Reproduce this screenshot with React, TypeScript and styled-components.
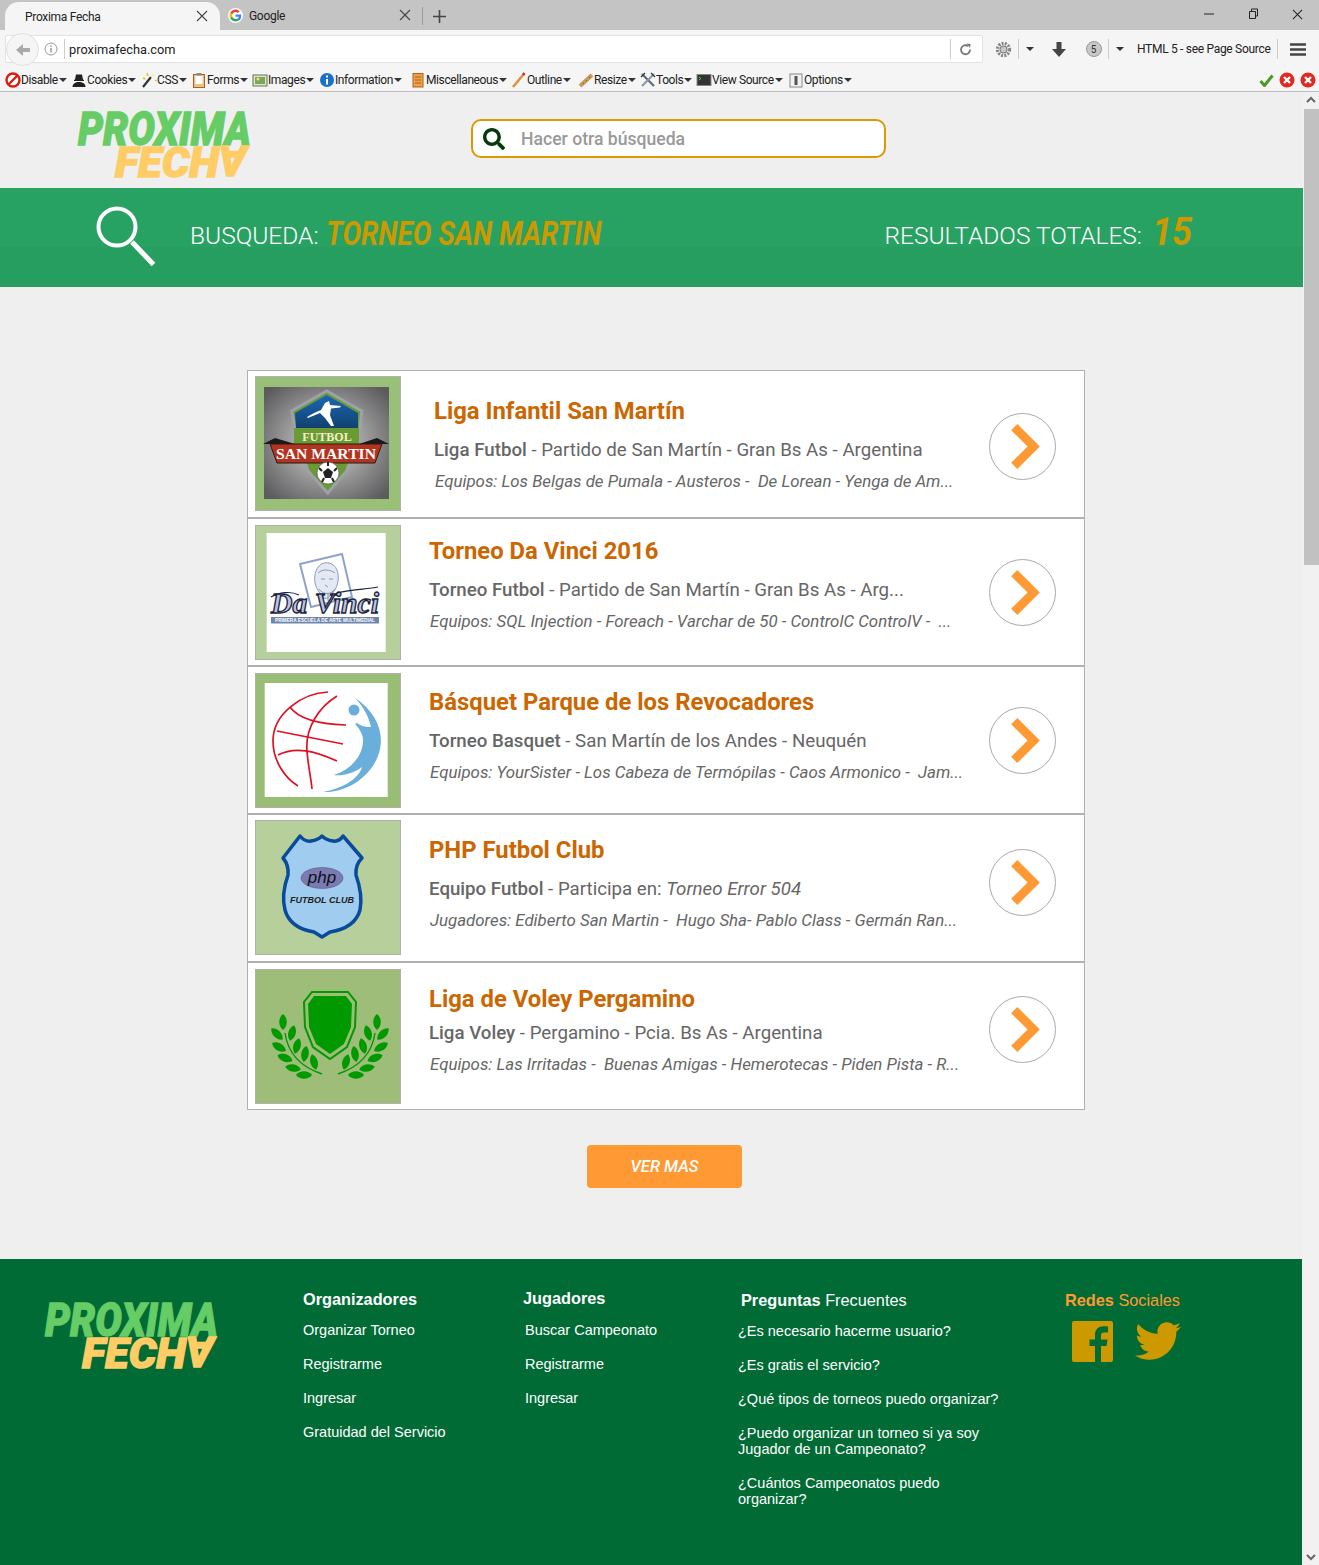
import React from 'react';
import styled, { createGlobalStyle } from 'styled-components';
import { FaTwitter, FaSearch } from 'react-icons/fa';

const Global = createGlobalStyle`
  html, body { margin: 0; padding: 0; background: #efefef; }
  * { box-sizing: border-box; }
  a { color: inherit; text-decoration: none; }
`;

const Window = styled.div`
  width: 1319px; height: 1565px; overflow: hidden; display: flex; flex-direction: column;
  background: #efefef; font-family: Roboto, sans-serif;
`;

/* ---------- browser chrome ---------- */
const TabBar = styled.div`
  height: 30px; flex: none; background: #c4c4c4; display: flex; align-items: flex-end; padding-left: 5px;
  font: 12px Roboto, sans-serif; letter-spacing: -0.3px; color: #222;
`;
const Tab = styled.div<{ $active?: boolean }>`
  height: ${p => (p.$active ? 28 : 30)}px; width: ${p => (p.$active ? 215 : 201)}px; flex: none;
  display: flex; align-items: center; gap: 6px;
  padding-left: ${p => (p.$active ? 20 : 8)}px; padding-right: ${p => (p.$active ? 12 : 10)}px;
  background: ${p => (p.$active ? '#f5f5f5' : 'transparent')};
  border-radius: ${p => (p.$active ? '14px 14px 0 0' : '0')};
`;
const TabTitle = styled.span`flex: 1; white-space: nowrap; padding-top: 1px;`;
const TabSep = styled.div`width: 1px; height: 18px; background: #999; margin: 0 0 5px 1px; flex: none;`;
const NewTab = styled.div`margin: 0 0 7px 10px; flex: none; display: flex;`;
const WinControls = styled.div`margin-left: auto; display: flex; align-items: center; gap: 31px; padding: 0 16px 10px 0;`;

const NavBar = styled.div`
  height: 37px; flex: none; background: #f5f5f5; display: flex; align-items: center; padding: 1px 0 0 5px;
  font: 12px Roboto, sans-serif; letter-spacing: -0.3px; color: #222;
`;
const UrlBox = styled.div`
  width: 978px; height: 28px; background: #fff; border: 1px solid #e2e2e2; border-radius: 2px;
  display: flex; align-items: center; position: relative; padding: 0 6px 0 38px; flex: none;
`;
const BackCircle = styled.div`
  position: absolute; left: 0; top: -3px; width: 33px; height: 33px; border-radius: 50%;
  background: #f5f5f5; border: 1px solid #e0e0e0; display: flex; align-items: center; justify-content: center;
`;
const UrlSep = styled.div`width: 1px; height: 20px; background: #ccc; margin: 0 4px 0 6px; flex: none;`;
const NavSep = styled.div`width: 1px; height: 20px; background: #ccc; flex: none;`;
const UrlText = styled.span`flex: 1; font-size: 12.8px; letter-spacing: 0; color: #222; padding-top: 1px;`;
const NavSpacer = styled.div<{ $w: number; $ml?: number }>`
  width: ${p => p.$w}px; margin-left: ${p => p.$ml ?? 0}px; flex: none; display: flex; align-items: center; justify-content: center;
`;
const Badge = styled.div`
  width: 16px; height: 16px; border-radius: 50%; background: #c8c8c8; border: 1px solid #999;
  font-size: 10px; display: flex; align-items: center; justify-content: center; color: #333;
`;
const HtmlLabel = styled.span`white-space: nowrap; margin-left: 8px; width: 140px; flex: none;`;

const ToolBar = styled.div`
  height: 25px; flex: none; background: #f5f5f5; border-bottom: 1px solid #bdbdbd;
  display: flex; align-items: center; padding: 2px 3px 0 5px; font: 12px Roboto, sans-serif; color: #222;
`;
const ToolItem = styled.div<{ $w: number }>`
  width: ${p => p.$w}px; flex: none; display: flex; align-items: center; white-space: nowrap;
  letter-spacing: -0.4px;
`;
const Caret = styled.span`
  width: 0; height: 0; border-left: 4px solid transparent; border-right: 4px solid transparent;
  border-top: 4px solid #333; margin-left: 1px; flex: none;
`;
const ToolEnd = styled.div`margin-left: auto; display: flex; align-items: center; gap: 5px;`;

/* ---------- page ---------- */
const Viewport = styled.div`flex: 1; display: flex; min-height: 0;`;
const Content = styled.div`width: 1303px; flex: none; display: flex; flex-direction: column;`;
const ScrollBar = styled.div`
  width: 16px; flex: none; background: #f1f1f1; display: flex; flex-direction: column; align-items: center;
  justify-content: space-between; position: relative; padding: 4px 0;
`;
const ScrollThumb = styled.div`position: absolute; left: 1px; top: 17px; width: 15px; height: 456px; background: #c1c1c1;`;

const Header = styled.header`height: 96px; flex: none; display: flex; align-items: flex-start; padding: 18px 0 0 77px;`;
const SearchBox = styled.div`
  width: 415px; height: 39px; margin: 9px 0 0 218px; background: #fff; border: 2px solid #dd9900; border-radius: 10px;
  display: flex; align-items: center; padding-left: 10px; color: #063a0c; flex: none;
`;
const SearchHint = styled.span`margin-left: 16px; font: 500 17.6px Roboto, sans-serif; color: #999;`;

const Banner = styled.section`
  height: 99px; flex: none; display: flex; align-items: flex-start; padding: 18px 114px 0 96px;
  background: linear-gradient(#27a263 0 60%, #259e60 60%); color: #fff;
`;
const BigLens = styled.svg`width: 60px; height: 60px; flex: none;`;
const BannerLabel = styled.span`font: 300 24.5px/32px Roboto, sans-serif; white-space: nowrap; margin-top: 14px;`;
const BannerLabelFirst = styled(BannerLabel)`margin-left: 34px;`;
const BannerLabelRight = styled(BannerLabel)`margin-left: auto;`;
const Condensed = styled.span<{ $w: number; $size: number; $scale: number; $top: number; $gap: number }>`
  display: block; flex: none; width: ${p => p.$w}px; margin: ${p => p.$top}px 0 0 ${p => p.$gap}px; white-space: nowrap;
  font: italic 700 ${p => p.$size}px/40px Roboto, sans-serif; color: #cc9900;
  transform: scaleX(${p => p.$scale}); transform-origin: left center;
`;

const Main = styled.main`width: 838px; margin: 83px 0 0 247px; flex: none; display: flex; flex-direction: column;`;
const List = styled.div`height: 740px; background: #fff; border: 1px solid #b0b0b0; display: flex; flex-direction: column;`;
const Row = styled.article<{ $last?: boolean }>`
  height: ${p => (p.$last ? 146 : 148)}px; flex: none; display: flex; padding-left: 7px;
  border-bottom: ${p => (p.$last ? '0' : '2px solid #b0b0b0')};
`;
const Thumb = styled.div<{ $bg: string; $top: number }>`
  width: 146px; height: 135px; flex: none; margin-top: ${p => p.$top}px; background: ${p => p.$bg}; border: 1px solid #b0b0b0;
  svg { display: block; width: 144px; height: 133px; }
`;
const RowText = styled.div<{ $left: number; $top: number }>`
  margin: ${p => p.$top}px 0 0 ${p => p.$left}px; width: 540px; flex: none; white-space: nowrap;
`;
const Title = styled.h2`margin: 0; font: 700 23.85px/30px Roboto, sans-serif; color: #cc6600;`;
const Sub = styled.p<{ $gap: number }>`margin: ${p => p.$gap}px 0 0; font: 400 18.7px/24px Roboto, sans-serif; color: #666;`;
const SubStrong = styled.span`font-weight: 500;`;
const Teams = styled.p`margin: 8px 0 0 1px; font: italic 400 16.85px/22px Roboto, sans-serif; color: #666;`;
const Arrow = styled.a<{ $top: number }>`
  width: 67px; height: 67px; flex: none; margin: ${p => p.$top}px 28px 0 auto; border-radius: 50%; border: 1px solid #aaa;
  display: flex; align-items: center; justify-content: center; background: #fff;
`;
const More = styled.button`
  width: 155px; height: 43px; margin: 35px 0 0 340px; background: #ff9933; border: 0; border-radius: 4px; color: #fff;
  font: italic 500 16.5px Roboto, sans-serif; flex: none;
`;

/* ---------- footer ---------- */
const Footer = styled.footer`
  margin-top: 71px; width: 1302px; flex: 1; background: #006b35; color: #fff; padding: 30px 0 0 44px;
  display: grid; grid-template-columns: 259px 220px 215px 327px 1fr; font: 14.5px/16px "Liberation Sans", Arial, sans-serif;
`;
const FooterLogo = styled.div`padding-top: 12px;`;
const Column = styled.div`display: flex; flex-direction: column; align-items: flex-start;`;
const ColHead = styled.h3<{ $left?: number; $top?: number; $color?: string }>`
  margin: ${p => p.$top ?? 0}px 0 0 ${p => p.$left ?? 0}px; font: 700 16.3px/20px "Liberation Sans", Arial, sans-serif;
  color: ${p => p.$color ?? '#fff'}; white-space: nowrap;
`;
const HeadLight = styled.span`font-weight: 400;`;
const Links = styled.div<{ $left?: number; $top: number }>`
  margin: ${p => p.$top}px 0 0 ${p => p.$left ?? 0}px; display: flex; flex-direction: column; gap: 18px; width: 265px;
`;
const Social = styled.div`display: flex; align-items: center; gap: 22px; margin: 8px 0 0 7px; color: #cc9900;`;

/* ---------- drawings ---------- */
const LogoSvg = styled.svg`width: 176px; height: 70px; display: block; overflow: visible; flex: none;`;
const LogoWord = styled.text<{ $fill: string; $size: number }>`
  font: italic 900 ${p => p.$size}px Roboto, sans-serif; fill: ${p => p.$fill}; stroke: ${p => p.$fill}; stroke-width: 1.3px;
`;
const Logo = () => (
  <LogoSvg viewBox="0 0 176 70">
    <LogoWord $fill="#66cc66" $size={47} x="1" y="34.500" textLength="173" lengthAdjust="spacingAndGlyphs">PROXIMA</LogoWord>
    <LogoWord $fill="#ffcc66" $size={43} x="38" y="66.500" textLength="104" lengthAdjust="spacingAndGlyphs">FECH</LogoWord>
    <LogoWord $fill="#ffcc66" $size={43} transform="translate(170 36) rotate(180)" x="0" y="0" textLength="28" lengthAdjust="spacingAndGlyphs">A</LogoWord>
  </LogoSvg>
);

const ThumbLabel = styled.text<{ $size: number; $fill: string; $family?: string; $style?: string }>`
  font: ${p => p.$style ?? '700'} ${p => p.$size}px ${p => p.$family ?? '"Liberation Serif", serif'};
  fill: ${p => p.$fill}; text-anchor: middle;
`;

const SanMartinArt = () => (
  <svg viewBox="1 1 144 133">
    <defs>
      <radialGradient id="sm" cx="50%" cy="50%" r="65%"><stop offset="0" stopColor="#d8d8d8" /><stop offset="1" stopColor="#5c5c5e" /></radialGradient>
      <linearGradient id="smb" x1="0" y1="0" x2="0" y2="1"><stop offset="0" stopColor="#1a66b8" /><stop offset="1" stopColor="#12426e" /></linearGradient>
    </defs>
    <rect x="9" y="11" width="125" height="112" fill="url(#sm)" />
    <polygon points="71.7,15 106.7,35 105,52 91.700,95 72.700,117 53,95 40,52 36.700,35" fill="#6a9a34" stroke="#9ea2a8" strokeWidth="3" />
    <polygon points="71.7,19 103,37 103,52 41,52 40,37" fill="url(#smb)" />
    <path d="M52 41 Q60 36 66 34 L70 27 L74 25 L75 29 L86 30 L85 31.500 L76 32.500 L75 39 L79 50 L76 50 L70 42 L65 37 L53 42Z" fill="#fff" />
    <rect x="39" y="52" width="65" height="17" fill="#6a9a34" />
    <ThumbLabel $size={12} $fill="#f4efc8" x="72" y="65">FUTBOL</ThumbLabel>
    <polygon points="8,68 20,62 40,68" fill="#1a1a1a" />
    <polygon points="134,68 122,62 104,68" fill="#1a1a1a" />
    <polygon points="15,68 127,68 120,87 22,87" fill="#b03420" stroke="#2a1a16" strokeWidth="1" />
    <ThumbLabel $size={15.500} $fill="#fff" x="71" y="83" textLength="100" lengthAdjust="spacingAndGlyphs">SAN MARTIN</ThumbLabel>
    <circle cx="73" cy="97" r="11" fill="#fff" stroke="#444" strokeWidth=".6" />
    <polygon points="73,92 78,96 76,102 70,102 68,96" fill="#222" />
    <path d="M73 86v4M64 92l3 3M82 92l-3 3M67 106l2-4M79 106l-2-4" stroke="#222" strokeWidth="2" />
  </svg>
);

const DaVinciArt = () => (
  <svg viewBox="1 1 144 133">
    <rect x="11.7" y="8" width="119" height="119" fill="#fff" />
    <polygon points="45,39 87,29 97,72 56,82" fill="#fff" stroke="#8ea3cc" strokeWidth="2" />
    <path d="M60 58c-2-14 6-22 14-20 8 2 10 10 9 18-1 8-6 14-12 18-4-3-9-8-11-16z" fill="#e4e9f3" stroke="#8b9cbc" strokeWidth="1" />
    <path d="M63 48c4-4 12-4 17 0M66 54h4M74 54h4M70 60l3 2M64 64c4 6 12 6 16 0M67 68l2 6M73 68l0 8M78 66l-1 6" stroke="#7d8eb0" strokeWidth=".9" fill="none" />
    <ThumbLabel $size={29} $fill="#b9c6e2" $style="italic 700" x="70" y="88" stroke="#1d2340" strokeWidth="1.300" textLength="108" lengthAdjust="spacingAndGlyphs">Da Vinci</ThumbLabel>
    <path d="M16 72c8-5 20-6 28-2M82 68c10-3 30-4 41-6" fill="none" stroke="#1d2340" strokeWidth="1.200" />
    <rect x="16" y="92" width="108" height="6.500" fill="#6f86ad" />
    <ThumbLabel $size={4.600} $fill="#fff" $family='"Liberation Sans", sans-serif' x="70" y="97" textLength="100" lengthAdjust="spacingAndGlyphs">PRIMERA ESCUELA DE ARTE MULTIMEDIAL</ThumbLabel>
  </svg>
);

const BasketArt = () => (
  <svg viewBox="1 1 144 133">
    <rect x="9.7" y="10" width="123" height="114" fill="#fff" />
    <g fill="none" stroke="#dd1122" strokeWidth="1.700">
      <path d="M73 19 C48 20 18 40 18 68 C18 88 30 105 43 113" />
      <path d="M82 23 C64 34 50 55 52 78 C53 92 56 105 57 116" />
      <path d="M35 34 C42 44 60 51 91 52" />
      <path d="M22 58 L88 71" />
      <path d="M23 82 C40 73 60 78 82 88" />
    </g>
    <circle cx="99" cy="37" r="5.500" fill="#6aaedc" />
    <path d="M100 25 C120 38 129 58 125 76 C120 100 95 120 68 119 C86 116 104 106 107 94 C98 101 86 103 79 102 C94 97 106 86 108 70 C109 62 104 55 100 51 L102 50 C107 54 112 54 116 54 C114 44 108 33 100 25Z" fill="#6aaedc" />
  </svg>
);

const PhpArt = () => (
  <svg viewBox="1 1 144 133">
    <path d="M45 16 Q50 22 56 21 Q63 20 67 16 Q71 20 78 21 Q84 22 88 16 L107 38 Q100 45 101 55 Q108 75 105 90 Q100 108 75 112 L67 117 L59 112 Q35 108 30 90 Q26 75 33 55 Q34 45 28 38 Z" fill="#a0ccf0" stroke="#0a4a9a" strokeWidth="3.500" strokeLinejoin="round" />
    <ellipse cx="67" cy="58" rx="21" ry="10.500" fill="#7a7ab5" stroke="#555" strokeWidth=".5" />
    <ThumbLabel $size={17} $fill="#111" $family='"Liberation Sans", sans-serif' $style="italic 400" x="67" y="63">php</ThumbLabel>
    <ThumbLabel $size={9} $fill="#222" $family='"Liberation Sans", sans-serif' $style="italic 700" x="67" y="83">FUTBOL CLUB</ThumbLabel>
  </svg>
);

const LEAVES: [number, number, number][] = [
  [28, 53, 0], [22, 65, -45], [37, 64, 15], [24, 78, -60], [42, 77, 15],
  [30, 89, -70], [50, 85, 10], [38, 99, -80], [59, 93, -15], [49, 106, -90],
];
const Branch = () => (
  <g fill="#009900">
    {LEAVES.map(([x, y, r]) => (
      <path key={`${x}-${y}`} d="M0 -8 C5 -4 5 4 0 8 C-5 4 -5 -4 0 -8z" transform={`translate(${x} ${y}) rotate(${r})`} />
    ))}
    <path d="M30 64 C33 85 46 98 67 105" fill="none" stroke="#009900" strokeWidth="1.400" />
  </g>
);
const LaurelArt = () => (
  <svg viewBox="1 1 144 133">
    <polygon points="57,23 93,23 101,33 100,58 92,78 75,90 58,78 50,58 49,33" fill="none" stroke="#009900" strokeWidth="2" />
    <polygon points="59,27 91,27 97,35 96,58 89,75 75,85 61,75 54,58 53,35" fill="#009900" />
    <Branch />
    <g transform="translate(150 0) scale(-1 1)"><Branch /></g>
  </svg>
);

const Chevron = () => (
  <svg width="67" height="67" viewBox="0 0 67 67"><polyline points="25,13.500 45,33.500 25,53.500" fill="none" stroke="#ff9933" strokeWidth="9" /></svg>
);

const FacebookMark = () => (
  <svg width="41" height="41" viewBox="0 0 41 41">
    <path fill="currentColor" d="M2 0h37a2 2 0 0 1 2 2v37a2 2 0 0 1-2 2H29V25h5.500l1-6.500H29v-4c0-2 .8-3 3-3h4V5.500c-1-.1-2.500-.3-4.500-.3-5 0-8.500 3-8.500 8.500v4.800h-5.500V25H23v16H2a2 2 0 0 1-2-2V2a2 2 0 0 1 2-2z" />
  </svg>
);

const X = ({ size = 12, color = '#444' }: { size?: number; color?: string }) => (
  <svg width={size} height={size} viewBox="0 0 12 12" style={{ flex: 'none' }}><path d="M1 1l10 10M11 1L1 11" stroke={color} strokeWidth="1.100" /></svg>
);

const GoogleG = () => (
  <svg width="15" height="15" viewBox="0 0 48 48" style={{ flex: 'none' }}>
    <circle cx="24" cy="24" r="24" fill="#fff" />
    <path fill="#EA4335" d="M24 13c3 0 5.500 1 7.500 3l5.500-5.500C33.500 7 29 5 24 5 16.500 5 10 9.300 7 15.600l6.500 5C15 16.400 19 13 24 13z" />
    <path fill="#4285F4" d="M42.500 24.500c0-1.400-.1-2.700-.4-4H24v7.600h10.500c-.5 2.500-1.900 4.600-4 6l6.300 4.900c3.700-3.400 5.700-8.400 5.700-14.500z" />
    <path fill="#FBBC05" d="M13.500 28.400c-.9-2.700-.9-6 0-8.800l-6.500-5c-2.700 5.500-2.700 13.300 0 18.800z" />
    <path fill="#34A853" d="M24 43c5 0 9.400-1.700 12.800-4.500l-6.300-4.900c-1.700 1.200-4 1.900-6.500 1.900-5 0-9-3.400-10.500-8l-6.500 5C10 38.700 16.500 43 24 43z" />
  </svg>
);

type IconKey = 'disable' | 'cookies' | 'css' | 'forms' | 'images' | 'info' | 'misc' | 'outline' | 'resize' | 'tools' | 'source' | 'options';
const ToolIcon = ({ kind }: { kind: IconKey }) => {
  const art: Record<IconKey, React.ReactNode> = {
    disable: <><circle cx="8" cy="8" r="6.500" fill="#fff" stroke="#d81f14" strokeWidth="2.400" /><path d="M3.500 12.500l9-9" stroke="#d81f14" strokeWidth="2.400" /></>,
    cookies: <><path d="M5 2.500h6l1 5 1 .5v1H3V8l1-.5z" fill="#222" /><path d="M1.500 15c0-3.500 3-5 6.500-5s6.500 1.500 6.500 5z" fill="#222" /></>,
    css: <><path d="M2 15L10 5" stroke="#333" strokeWidth="2.200" /><path d="M10 5l3-3.500" stroke="#f2f2c0" strokeWidth="2.200" /><path d="M6 1l1 3M14 8l1.500 1M2 6l2.500 1" stroke="#e6c020" strokeWidth="1.500" /></>,
    forms: <><rect x="2.500" y="2.500" width="11" height="13" fill="#f0c080" stroke="#a8622a" /><rect x="4.500" y="4" width="7" height="8" fill="#fff" /><rect x="5.500" y="1" width="5" height="2.500" fill="#888" /></>,
    images: <><rect x="1" y="3" width="14" height="11" fill="#dfe6d4" stroke="#66704f" /><rect x="3" y="5" width="10" height="7" fill="#78a858" /><circle cx="6" cy="7" r="1.500" fill="#f4e27a" /></>,
    info: <><circle cx="8" cy="8" r="7" fill="#1a6fc8" /><rect x="7" y="7" width="2" height="5.500" fill="#fff" /><rect x="7" y="3.500" width="2" height="2" fill="#fff" /></>,
    misc: <><rect x="3" y="1.500" width="10" height="13.500" fill="#f0a040" stroke="#a8622a" /><path d="M5 5h6M5 8h6M5 11h6" stroke="#a8622a" /></>,
    outline: <><path d="M2 15L12 3" stroke="#e09040" strokeWidth="2.600" /><path d="M12 3l1.500-1.800" stroke="#c02020" strokeWidth="2.600" /></>,
    resize: <><path d="M2 14L14 3" stroke="#c89858" strokeWidth="4" /><path d="M5 11l1 1M8 8l1 1M11 5l1 1" stroke="#7a5a2a" /></>,
    tools: <><path d="M2 2l12 12" stroke="#667" strokeWidth="2.200" /><path d="M14 2L2 14" stroke="#8899aa" strokeWidth="2.200" /><path d="M1 5l4-4M11 1l4 4" stroke="#333" strokeWidth="1.200" /></>,
    source: <><rect x="1" y="2.500" width="14" height="11" fill="#333" stroke="#888" /><path d="M3 5l2 1.500L3 8" stroke="#5c5" fill="none" /></>,
    options: <><rect x="2" y="2" width="12" height="13" fill="#f2f2f2" stroke="#888" /><rect x="6.500" y="4" width="3" height="9" fill="#555" /></>,
  };
  return <svg width="16" height="16" viewBox="0 0 16 16" style={{ flex: 'none' }}>{art[kind]}</svg>;
};

const TOOLS: { k: IconKey; t: string; w: number }[] = [
  { k: 'disable', t: 'Disable', w: 66 }, { k: 'cookies', t: 'Cookies', w: 70 }, { k: 'css', t: 'CSS', w: 50 },
  { k: 'forms', t: 'Forms', w: 61 }, { k: 'images', t: 'Images', w: 67 }, { k: 'info', t: 'Information', w: 91 },
  { k: 'misc', t: 'Miscellaneous', w: 101 }, { k: 'outline', t: 'Outline', w: 67 }, { k: 'resize', t: 'Resize', w: 62 },
  { k: 'tools', t: 'Tools', w: 56 }, { k: 'source', t: 'View Source', w: 92 }, { k: 'options', t: 'Options', w: 70 },
];

const Strong = SubStrong;
const ROWS = [
  { art: <SanMartinArt />, bg: '#9abf78', thumbTop: 5, left: 33, top: 25, title: 'Liga Infantil San Martín', gap: 12, arrow: 42,
    sub: <><Strong>Liga Futbol</Strong> - Partido de San Martín - Gran Bs As - Argentina</>,
    teams: 'Equipos: Los Belgas de Pumala - Austeros -\u00A0 De Lorean - Yenga de Am...' },
  { art: <DaVinciArt />, bg: '#b6d09c', thumbTop: 6, left: 28, top: 17, title: 'Torneo Da Vinci 2016', gap: 12, arrow: 40,
    sub: <><Strong>Torneo Futbol</Strong> - Partido de San Martín - Gran Bs As - Arg...</>,
    teams: 'Equipos: SQL Injection - Foreach - Varchar de 50 - ControlC ControlV -\u00A0 ...' },
  { art: <BasketArt />, bg: '#9abd75', thumbTop: 6, left: 28, top: 20, title: 'Básquet Parque de los Revocadores', gap: 12, arrow: 40,
    sub: <><Strong>Torneo Basquet</Strong> - San Martín de los Andes - Neuquén</>,
    teams: 'Equipos: YourSister - Los Cabeza de Termópilas - Caos Armonico -\u00A0 Jam...' },
  { art: <PhpArt />, bg: '#b7d09b', thumbTop: 5, left: 28, top: 20, title: 'PHP Futbol Club', gap: 12, arrow: 34,
    sub: <><Strong>Equipo Futbol</Strong> - Participa en: <em>Torneo Error 504</em></>,
    teams: 'Jugadores: Ediberto San Martin -\u00A0 Hugo Sha- Pablo Class - Germán Ran...' },
  { art: <LaurelArt />, bg: '#9dbd78', thumbTop: 6, left: 28, top: 21, title: 'Liga de Voley Pergamino', gap: 7, arrow: 33,
    sub: <><Strong>Liga Voley</Strong> - Pergamino - Pcia. Bs As - Argentina</>,
    teams: 'Equipos: Las Irritadas -\u00A0 Buenas Amigas - Hemerotecas - Piden Pista - R...' },
];

export default function App() {
  return (
    <Window>
      <Global />
      <TabBar>
        <Tab $active><TabTitle>Proxima Fecha</TabTitle><X /></Tab>
        <Tab><GoogleG /><TabTitle>Google</TabTitle><X /></Tab>
        <TabSep />
        <NewTab><svg width="13" height="13" viewBox="0 0 13 13"><path d="M6.500 0v13M0 6.500h13" stroke="#444" strokeWidth="1.600" /></svg></NewTab>
        <WinControls>
          <svg width="14" height="12" viewBox="0 0 14 12"><path d="M2 6h10" stroke="#222" /></svg>
          <svg width="14" height="12" viewBox="0 0 14 12"><path d="M4.500 3V1h6v7h-2M2.500 3.500h6v7h-6z" fill="none" stroke="#222" /></svg>
          <X size={11} color="#222" />
        </WinControls>
      </TabBar>
      <NavBar>
        <UrlBox>
          <BackCircle>
            <svg width="16" height="16" viewBox="0 0 16 16"><path d="M15 6H8V2L1 8l7 6v-4h7z" fill="#aaa" /></svg>
          </BackCircle>
          <svg width="14" height="14" viewBox="0 0 14 14"><circle cx="7" cy="7" r="6" fill="none" stroke="#999" /><path d="M7 6v4.500M7 3.500v1.500" stroke="#888" strokeWidth="1.300" /></svg>
          <UrlSep />
          <UrlText>proximafecha.com</UrlText>
          <UrlSep />
          <NavSpacer $w={21}>
            <svg width="13" height="13" viewBox="0 0 13 13"><path d="M11 6.500A4.500 4.500 0 1 1 9 3" fill="none" stroke="#777" strokeWidth="1.800" /><path d="M7.500 0.500l4 .5-.5 4z" fill="#777" /></svg>
          </NavSpacer>
        </UrlBox>
        <NavSpacer $w={30} $ml={5}>
          <svg width="17" height="17" viewBox="0 0 17 17"><circle cx="8.500" cy="8.500" r="6" fill="none" stroke="#888" strokeWidth="3.400" strokeDasharray="2 1.200" /><circle cx="8.500" cy="8.500" r="3.500" fill="#c8c8c8" stroke="#777" /></svg>
        </NavSpacer>
        <NavSep />
        <NavSpacer $w={20}><Caret /></NavSpacer>
        <NavSpacer $w={40}>
          <svg width="14" height="15" viewBox="0 0 14 15"><path d="M4.500 0h5v7H14L7 15 0 7h4.500z" fill="#444" /></svg>
        </NavSpacer>
        <NavSpacer $w={29}><Badge>5</Badge></NavSpacer>
        <NavSep />
        <NavSpacer $w={20}><Caret /></NavSpacer>
        <HtmlLabel>HTML 5 - see Page Source</HtmlLabel>
        <NavSep />
        <NavSpacer $w={40}>
          <svg width="16" height="13" viewBox="0 0 16 13"><path d="M0 1.500h16M0 6.500h16M0 11.500h16" stroke="#444" strokeWidth="2.400" /></svg>
        </NavSpacer>
      </NavBar>
      <ToolBar>
        {TOOLS.map(i => (
          <ToolItem key={i.k} $w={i.w}><ToolIcon kind={i.k} />{i.t}<Caret /></ToolItem>
        ))}
        <ToolEnd>
          <svg width="15" height="13" viewBox="0 0 15 13"><path d="M1.500 7l4 4.500L13.500 1.500" fill="none" stroke="#4a9a20" strokeWidth="3" /></svg>
          {[0, 1].map(n => (
            <svg key={n} width="16" height="16" viewBox="0 0 16 16"><circle cx="8" cy="8" r="7.500" fill="#e02a20" /><path d="M5 5l6 6M11 5l-6 6" stroke="#fff" strokeWidth="2.400" /></svg>
          ))}
        </ToolEnd>
      </ToolBar>
      <Viewport>
        <Content>
          <Header>
            <Logo />
            <SearchBox><FaSearch size={22} /><SearchHint>Hacer otra búsqueda</SearchHint></SearchBox>
          </Header>
          <Banner>
            <BigLens viewBox="0 0 60 60">
              <circle cx="21" cy="21" r="18.500" fill="none" stroke="#fff" strokeWidth="4" />
              <path d="M36 36l21.500 22.500" stroke="#fff" strokeWidth="5" />
            </BigLens>
            <BannerLabelFirst>BUSQUEDA:</BannerLabelFirst>
            <Condensed $w={274} $size={34} $scale={0.82} $top={7} $gap={7}>TORNEO SAN MARTIN</Condensed>
            <BannerLabelRight>RESULTADOS TOTALES:</BannerLabelRight>
            <Condensed $w={37} $size={38} $scale={0.95} $top={6} $gap={10}>15</Condensed>
          </Banner>
          <Main>
            <List>
              {ROWS.map((r, idx) => (
                <Row key={r.title} $last={idx === ROWS.length - 1}>
                  <Thumb $bg={r.bg} $top={r.thumbTop}>{r.art}</Thumb>
                  <RowText $left={r.left} $top={r.top}>
                    <Title>{r.title}</Title>
                    <Sub $gap={r.gap}>{r.sub}</Sub>
                    <Teams>{r.teams}</Teams>
                  </RowText>
                  <Arrow $top={r.arrow}><Chevron /></Arrow>
                </Row>
              ))}
            </List>
            <More>VER MAS</More>
          </Main>
          <Footer>
            <FooterLogo><Logo /></FooterLogo>
            <Column>
              <ColHead>Organizadores</ColHead>
              <Links $top={13}>
                <a>Organizar Torneo</a><a>Registrarme</a><a>Ingresar</a><a>Gratuidad del Servicio</a>
              </Links>
            </Column>
            <Column>
              <ColHead $top={-1}>Jugadores</ColHead>
              <Links $left={2} $top={14}>
                <a>Buscar Campeonato</a><a>Registrarme</a><a>Ingresar</a>
              </Links>
            </Column>
            <Column>
              <ColHead $left={3} $top={1}>Preguntas <HeadLight>Frecuentes</HeadLight></ColHead>
              <Links $top={13}>
                <a>¿Es necesario hacerme usuario?</a><a>¿Es gratis el servicio?</a><a>¿Qué tipos de torneos puedo organizar?</a>
                <a>¿Puedo organizar un torneo si ya soy Jugador de un Campeonato?</a><a>¿Cuántos Campeonatos puedo organizar?</a>
              </Links>
            </Column>
            <Column>
              <ColHead $top={1} $color="#ff9933">Redes <HeadLight>Sociales</HeadLight></ColHead>
              <Social>
                <FacebookMark />
                <FaTwitter size={46} />
              </Social>
            </Column>
          </Footer>
        </Content>
        <ScrollBar>
          <ScrollThumb />
          <svg width="10" height="8" viewBox="0 0 10 8"><path d="M1 6l4-4 4 4" fill="none" stroke="#666" strokeWidth="2" /></svg>
          <svg width="10" height="8" viewBox="0 0 10 8"><path d="M1 2l4 4 4-4" fill="none" stroke="#666" strokeWidth="2" /></svg>
        </ScrollBar>
      </Viewport>
    </Window>
  );
}
